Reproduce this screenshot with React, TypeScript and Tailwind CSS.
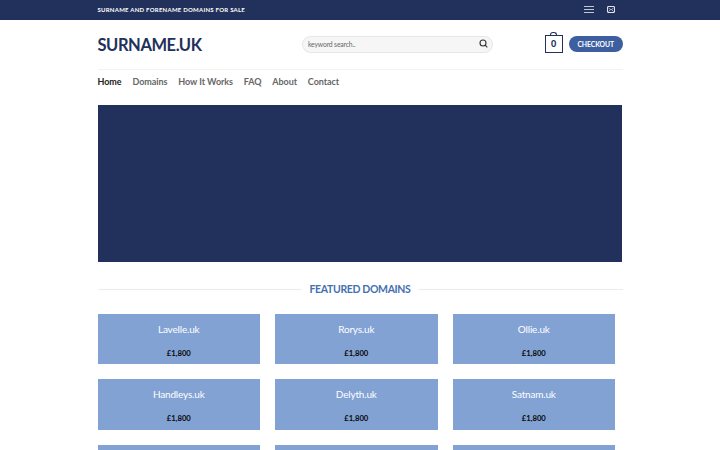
import React from "react";

const nav = ["Home", "Domains", "How It Works", "FAQ", "About", "Contact"];

const domains = [
  { name: "Lavelle.uk", price: "£1,800" },
  { name: "Rorys.uk", price: "£1,800" },
  { name: "Ollie.uk", price: "£1,800" },
  { name: "Handleys.uk", price: "£1,800" },
  { name: "Delyth.uk", price: "£1,800" },
  { name: "Satnam.uk", price: "£1,800" },
  { name: "", price: "" },
  { name: "", price: "" },
  { name: "", price: "" },
];

function TopBar() {
  return (
    <div className="h-[19.5px] bg-[#22315b]">
      <div className="mx-auto flex h-full w-[525px] items-center justify-between">
        <span className="whitespace-nowrap text-[6px] font-bold leading-[19px] tracking-[0.25px] text-white">
          SURNAME AND FORENAME DOMAINS FOR SALE
        </span>
        <div className="flex items-center gap-[12.500px] pr-[8px]">
          <svg width="10" height="7" viewBox="0 0 10 7" stroke="#c3c8d6" strokeWidth="1">
            <path d="M0 0.5h10M0 3.5h10M0 6.500h10" />
          </svg>
          <svg width="8" height="7" viewBox="0 0 8 7" fill="none" stroke="#e1e4eb" strokeWidth="1">
            <rect x="0.5" y="0.5" width="7" height="6" rx="0.4" />
            <path d="M1.5 2 4 4 6.500 2M1.400 5.600 2.800 4.200M6.600 5.600 5.200 4.200" strokeWidth="0.8" />
          </svg>
        </div>
      </div>
    </div>
  );
}

function Header() {
  return (
    <header className="mx-auto flex h-[50px] w-[525px] items-center border-b border-[#f3f3f3]">
      <h1 className="w-[204.500px] pt-[2px] text-[16.500px] font-bold leading-[20px] tracking-[-0.430px] text-[#22315b]">SURNAME.UK</h1>
      <div className="flex h-[17px] w-[191px] items-center justify-between rounded-full border border-[#e6e6e6] bg-[#f6f6f6] pl-[5px] pr-[4px]">
        <span className="text-[6.800px] leading-[15px] tracking-[-0.150px] text-[#666]">keyword search..</span>
        <svg className="mb-px" width="9" height="9" viewBox="0 0 9 9" fill="none" stroke="#333" strokeWidth="1.100">
          <circle cx="4" cy="4" r="3" />
          <path d="m6.200 6.200 2.100 2.100" />
        </svg>
      </div>
      <div className="ml-auto flex items-center gap-[6.500px]">
        <div className="relative flex h-[18px] w-[18px] items-center justify-center border-[1.500px] border-[#22315b] pb-px text-[9px] font-black leading-[12px] text-[#22315b]">
          <span className="absolute -top-[4px] left-[4px] h-[3px] w-[7px] rounded-t-full border border-b-0 border-[#22315b]" />
          0
        </div>
        <div className="flex h-[16.500px] w-[53.500px] items-center justify-center rounded-full bg-[#3d5f9f] text-[6.800px] font-bold tracking-[-0.050px] text-white">
          CHECKOUT
        </div>
      </div>
    </header>
  );
}

function Nav() {
  return (
    <nav className="mx-auto flex h-[35px] w-[525px] gap-[10.800px] pt-[5px] text-[9px] font-bold leading-[13px] tracking-[-0.050px]">
      {nav.map((item, i) => (
        <a key={item} className={i === 0 ? "whitespace-nowrap text-[#222]" : "whitespace-nowrap text-[#666]"}>
          {item}
        </a>
      ))}
    </nav>
  );
}

export default function App() {
  return (
    <div className="h-[450px] w-[720px] overflow-hidden bg-white font-['Lato',sans-serif]">
      <TopBar />
      <Header />
      <Nav />
      <div className="mx-auto h-[157.500px] w-[523.500px] bg-[#22315b]" />
      <div className="mx-auto mt-[20px] flex h-[14px] w-[525px] items-center gap-[7.500px]">
        <div className="h-px flex-1 bg-[#ececec]" />
        <h2 className="whitespace-nowrap text-[10.500px] font-bold leading-[14px] tracking-[-0.350px] text-[#446fb1]">FEATURED DOMAINS</h2>
        <div className="h-px flex-1 bg-[#ececec]" />
      </div>
      <div className="ml-[97.500px] mt-[18px] grid w-[517.500px] grid-cols-3 gap-[15px]">
        {domains.map((d, i) => (
          <div key={i} className="h-[50.300px] bg-[#82a2d4] pt-[8px] text-center">
            <div className="h-[14px] text-[10px] leading-[14px] tracking-[-0.180px] text-white">{d.name}</div>
            <div className="mt-[10.500px] text-[7.700px] font-bold leading-[13px] text-[#0a0a0a]">{d.price}</div>
          </div>
        ))}
      </div>
    </div>
  );
}
